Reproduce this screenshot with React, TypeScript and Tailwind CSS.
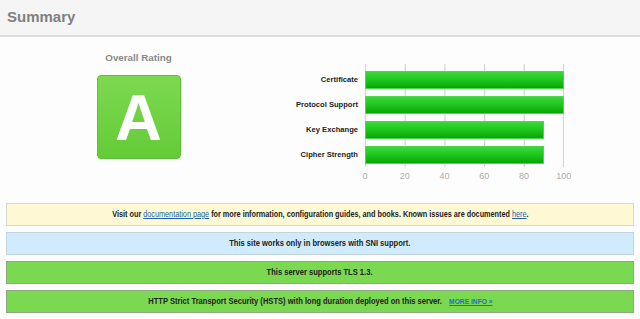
const bars = [
  { label: 'Certificate', value: 100 },
  { label: 'Protocol Support', value: 100 },
  { label: 'Key Exchange', value: 90 },
  { label: 'Cipher Strength', value: 90 },
];

const ticks = [0, 20, 40, 60, 80, 100];

// Resumen de calificacion (columna izquierda)
const Rating = () => (
  <div className="w-[277px] flex flex-col items-center pt-[15px]">
    <div className="h-[12px] leading-[12px] text-[9.8px] font-bold text-[#8a8a8a]">Overall Rating</div>
    <div className="mt-[11px] w-[84px] h-[84px] rounded-[4px] border border-[#5cbf35] bg-linear-to-b from-[#7dd950] to-[#64cb37] flex items-center justify-center">
      <span className="text-[65px] leading-none font-bold text-white">A</span>
    </div>
  </div>
);

// Grafico de barras
const Chart = () => (
  <div className="flex pt-[27px]">
    <div className="w-[81px] flex flex-col gap-[7px] pt-[7px]">
      {bars.map(b => (
        <div key={b.label} className="h-[18px] flex items-center justify-end text-[7.6px] font-bold text-[#222] whitespace-nowrap">
          {b.label}
        </div>
      ))}
    </div>
    <div className="ml-[7px] w-[199px]">
      <div className="relative flex flex-col gap-[7px] pt-[7px] pb-[3px]">
        <svg className="absolute inset-0 w-full h-full" viewBox="0 0 199 103" preserveAspectRatio="none">
          {ticks.map((t, i) => (
            <line key={t} x1={i === 5 ? 198.5 : 0.5 + i * 39.7} x2={i === 5 ? 198.5 : 0.5 + i * 39.7} y1="0" y2="103" stroke="#d4d4d4" strokeWidth="1.2" />
          ))}
        </svg>
        {bars.map(b => (
          <div key={b.label} className="relative h-[18px]">
            <div
              className="h-full border border-[#4cd84c] bg-linear-to-b from-[#38d838] via-[#1ec51e] to-[#04a804]"
              style={{ width: `${b.value}%` }}
            />
          </div>
        ))}
      </div>
      <div className="flex -ml-[20px] h-[20px] items-center">
        {ticks.map(t => (
          <div key={t} className="w-[39.8px] shrink-0 text-center text-[9px] text-[#ababab]">{t}</div>
        ))}
      </div>
    </div>
  </div>
);

interface NoticeProps {
  bg: string;
  border: string;
  narrow?: boolean;
  children: React.ReactNode;
}

const Notice = ({ bg, border, narrow, children }: NoticeProps) => (
  <div className={`h-[23px] border ${bg} ${border} flex items-center justify-center`}>
    <span className={`inline-block ${narrow ? 'scale-x-[0.855]' : 'scale-x-[0.89]'} text-[8.5px] font-bold text-[#222] whitespace-nowrap`}>
      {children}
    </span>
  </div>
);

export default function App() {
  return (
    <div className="w-[640px] h-[319px] bg-[#fdfdfd] font-['Liberation_Sans',Arial,sans-serif] overflow-hidden">
      <div className="h-[37px] bg-[#f5f5f5] border-b-2 border-[#dcdcdc] px-[7px] flex items-center">
        <h2 className="text-[15px] font-bold text-[#808080]">Summary</h2>
      </div>

      <div className="h-[166px] flex">
        <Rating />
        <Chart />
      </div>

      <div className="px-[6px] flex flex-col gap-[6px]">
        <Notice bg="bg-[#fff8d4]" border="border-[#d8d8d0]" narrow>
          Visit our <a className="text-[#1d5fa8] underline font-normal">documentation page</a> for more information, configuration guides, and books. Known issues are documented <a className="text-[#1d5fa8] underline font-normal">here</a>.
        </Notice>
        <Notice bg="bg-[#d0ecfc]" border="border-[#c4d4de]">
          This site works only in browsers with SNI support.
        </Notice>
        <Notice bg="bg-[#7bd851]" border="border-[#8fa883]">
          This server supports TLS 1.3.
        </Notice>
        <Notice bg="bg-[#7bd851]" border="border-[#8fa883]">
          HTTP Strict Transport Security (HSTS) with long duration deployed on this server.
          <a className="ml-[8px] text-[7.5px] text-[#1f6fc4] underline">MORE INFO »</a>
        </Notice>
      </div>
    </div>
  );
}
